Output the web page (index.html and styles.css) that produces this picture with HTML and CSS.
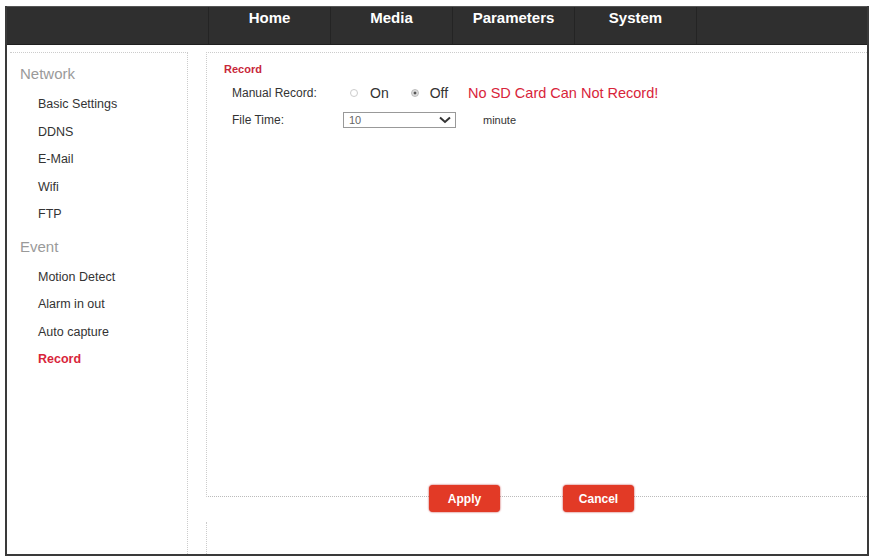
FILE: index.html
```html
<!DOCTYPE html>
<html lang="en">
<head>
  <meta charset="UTF-8" />
  <title>IP Camera - Record</title>
  <link rel="stylesheet" href="styles.css">
</head>
<body>

  <div class="frame">
    <div class="topbar">
      <ul class="nav">
        <li>Home</li>
        <li>Media</li>
        <li>Parameters</li>
        <li>System</li>
      </ul>
    </div>

    <div class="page">
      <div class="sidebar">
        <div class="group">Network</div>
        <a class="item">Basic Settings</a>
        <a class="item">DDNS</a>
        <a class="item">E-Mail</a>
        <a class="item">Wifi</a>
        <a class="item">FTP</a>
        <div class="group">Event</div>
        <a class="item">Motion Detect</a>
        <a class="item">Alarm in out</a>
        <a class="item">Auto capture</a>
        <a class="item active">Record</a>
      </div>

      <div class="main">
        <div class="panel">
          <div class="panel-title">Record</div>
          <div class="row">
            <span class="label">Manual Record:</span>
            <span class="radio"></span><span class="opt">On</span>
            <span class="radio checked"></span><span class="opt">Off</span>
            <span class="warn">No SD Card Can Not Record!</span>
          </div>
          <div class="row">
            <span class="label">File Time:</span>
            <span class="select">10
              <svg width="12" height="8" viewBox="0 0 12 8"><path d="M1 1.5 L6 6 L11 1.5" fill="none" stroke="#333" stroke-width="2"/></svg>
            </span>
            <span class="unit">minute</span>
          </div>
        </div>
        <div class="actions">
          <button class="btn">Apply</button>
          <button class="btn">Cancel</button>
        </div>
        <div class="panel-foot"></div>
      </div>
    </div>
  </div>

</body>
</html>
```

FILE: styles.css
```css
body {
  margin: 0;
  background-color: #fff;
  font-family: 'Liberation Sans', Arial, sans-serif;
  color: #333;
}
.frame {
  margin: 6px 0 0 5px;
  width: 860px;
  height: 548px;
  border: 2px solid #3a3a3a;
  border-top: none;
  display: flex;
  flex-direction: column;
}
.topbar {
  height: 37px;
  background-color: #2f2f2f;
  border-top: 1px solid #555;
  border-bottom: 1px solid #1f1f1f;
}
.nav {
  list-style: none;
  margin: 0 0 0 201px;
  padding: 0;
  display: flex;
  height: 100%;
  border-left: 1px solid #242424;
}
.nav li {
  width: 121px;
  border-right: 1px solid #242424;
  text-align: center;
  color: #fff;
  font-weight: bold;
  font-size: 15px;
  line-height: 21px;
}
.page {
  flex: 1;
  display: flex;
  margin-top: 7px;
}
.sidebar {
  width: 177px;
  margin-left: 3px;
  border-top: 1px dotted #ccc;
  border-right: 1px dotted #ccc;
  padding-top: 11px;
}
.group {
  color: #9a9a9a;
  font-size: 15px;
  line-height: 20px;
  margin-left: 10px;
  margin-bottom: 7px;
}
.item + .group {
  margin-top: 8px;
}
.item {
  display: block;
  margin-left: 28px;
  font-size: 12.5px;
  height: 27.5px;
  line-height: 27px;
  color: #333;
}
.item.active {
  color: #d8243a;
  font-weight: bold;
}
.main {
  flex: 1;
  margin-left: 18px;
  display: flex;
  flex-direction: column;
}
.panel {
  height: 445px;
  border-top: 1px dotted #ccc;
  border-left: 1px dotted #ccc;
  border-bottom: 1px dotted #bbb;
  padding: 9px 0 0 17px;
  box-sizing: border-box;
}
.panel-title {
  color: #c8283a;
  font-weight: bold;
  font-size: 11px;
  line-height: 14px;
}
.row {
  display: flex;
  align-items: center;
  height: 27px;
  padding-left: 8px;
  font-size: 12px;
}
.row:nth-child(2) {
  margin-top: 3px;
}
.label {
  width: 111px;
}
.radio {
  width: 8px;
  height: 8px;
  border: 1px solid #ccc;
  border-radius: 50%;
  margin: 0 12px 0 7px;
  box-sizing: border-box;
}
.radio.checked {
  border-color: #bbb;
  background: radial-gradient(circle, #555 30%, #ddd 40%);
  margin-left: 22px;
  margin-right: 11px;
}
.opt {
  font-size: 14px;
}
.warn {
  color: #d8243a;
  font-size: 14.5px;
  margin-left: 20px;
}
.select {
  width: 106px;
  height: 14px;
  border: 1px solid #999;
  font-size: 11px;
  line-height: 14px;
  padding-left: 5px;
  box-sizing: content-box;
  display: flex;
  justify-content: space-between;
  align-items: center;
  color: #666;
}
.select svg {
  margin-right: 4px;
}
.unit {
  margin-left: 27px;
  font-size: 11px;
}
.actions {
  display: flex;
  justify-content: flex-start;
  gap: 63px;
  margin: -12px 0 0 223px;
}
.btn {
  width: 71px;
  height: 27px;
  background-color: #e23a26;
  color: #fff;
  font-family: 'Liberation Sans', Arial, sans-serif;
  font-weight: bold;
  font-size: 12px;
  border: none;
  border-radius: 4px;
  box-shadow: 0 0 2px #b22;
}
.panel-foot {
  flex: 1;
  margin-top: 10px;
  border-left: 1px dotted #ccc;
}
```
